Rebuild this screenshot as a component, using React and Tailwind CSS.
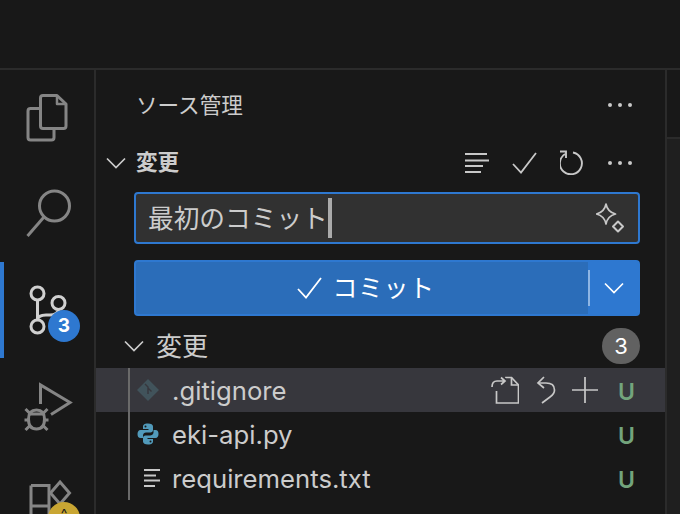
import React from 'react';

// Activity bar icons are drawn on a 96x96 box
const FilesIcon = () => (
  <svg width="96" height="96" viewBox="0 0 96 96" fill="none" stroke="#858585" strokeWidth="3" strokeLinejoin="round">
    <path d="M43 25.5 H57 L66 34 V56 Q66 58.5 63.5 58.5 H43 Q40.5 58.5 40.5 56 V28 Q40.5 25.5 43 25.5 Z" />
    <path d="M57 26 V34 H65.5" strokeWidth="2.5" />
    <path d="M40 38.5 H30.5 Q28 38.5 28 41 V67.5 Q28 70 30.5 70 H51.5 Q54 70 54 67.5 V59" />
  </svg>
);

const SearchIcon = () => (
  <svg width="96" height="96" viewBox="0 0 96 96" fill="none" stroke="#858585" strokeWidth="3">
    <circle cx="54.5" cy="40" r="15" />
    <path d="M44 51 L27.5 70" />
  </svg>
);

const GitIcon = () => (
  <svg width="96" height="96" viewBox="0 0 96 96" fill="none" stroke="#d0d0d0" strokeWidth="3">
    <circle cx="37.5" cy="31.5" r="6.5" />
    <circle cx="58.5" cy="41" r="6.5" />
    <circle cx="37.5" cy="64.5" r="6.5" />
    <path d="M37.5 38 V58" />
    <path d="M58.5 47.5 Q58 53 50 53 H46 Q38 53 37.5 58" />
  </svg>
);

const DebugIcon = () => (
  <svg width="96" height="96" viewBox="0 0 96 96" fill="none" stroke="#858585" strokeWidth="3">
    <path d="M40.5 46 V27 L70 44.5 L51 56.5" />
    <path d="M28.5 61 Q28.5 52 36.5 52 Q44.5 52 44.5 61 Q44.5 71 36.5 71 Q28.5 71 28.5 61 Z" />
    <path d="M29 56 H44 M25.5 51 L30.5 56 M47.5 51 L42.5 56 M24.5 62 H28.5 M44.5 62 H48.5 M25.5 72 L30.5 67 M47.5 72 L42.5 67" />
  </svg>
);

const ExtensionsIcon = () => (
  <svg width="96" height="96" viewBox="0 0 96 96" fill="none" stroke="#858585" strokeWidth="3">
    <path d="M31 31.5 H49 V76 M31 31.5 V76 M31 52 H49" />
    <path d="M60 28 L69.5 39 L60 50 L50.5 39 Z" />
  </svg>
);

const Chevron = ({ className = '', color = '#cccccc' }) => (
  <svg width="20" height="12" viewBox="0 0 20 12" fill="none" stroke={color} strokeWidth="1.7" className={className}>
    <path d="M1 1.5 L10 10.5 L19 1.5" />
  </svg>
);

const Dots = () => (
  <svg width="24" height="6" viewBox="0 0 24 6" fill="#c8c8c8">
    <circle cx="2" cy="3" r="2" />
    <circle cx="12" cy="3" r="2" />
    <circle cx="22" cy="3" r="2" />
  </svg>
);

const ListIcon = () => (
  <svg width="24" height="20" viewBox="0 0 24 20" fill="none" stroke="#c8c8c8" strokeWidth="2">
    <path d="M0 1 H22 M0 7.5 H24 M0 13 H18 M0 19 H16" />
  </svg>
);

const CheckIcon = ({ color = '#c8c8c8', width = 25, height = 22 }) => (
  <svg width={width} height={height} viewBox="0 0 25 22" fill="none" stroke={color} strokeWidth="1.8">
    <path d="M1 12 L9 20.5 L24 1" />
  </svg>
);

const RefreshIcon = () => (
  <svg width="24" height="25" viewBox="0 0 24 25" fill="none" stroke="#c8c8c8" strokeWidth="1.9">
    <path d="M5 4 A11 11 0 1 0 13 2.5" />
    <path d="M0 1.5 H6 V8" />
  </svg>
);

const SparkleIcon = () => (
  <svg width="30" height="30" viewBox="0 0 30 30" fill="none" stroke="#c8c8c8" strokeWidth="1.7" strokeLinejoin="round">
    <path d="M10 1 Q11.5 9 19.5 11 Q11.5 13 10 21 Q8.5 13 0.5 11 Q8.5 9 10 1 Z" />
    <path d="M22 18.5 L27 23.5 L22 28.5 L17 23.5 Z" strokeWidth="2" />
  </svg>
);

const OpenFileIcon = () => (
  <svg width="28" height="28" viewBox="0 0 28 28" fill="none" stroke="#c8c8c8" strokeWidth="1.7">
    <path d="M5.5 15 V27 H27.5 V9 L20.5 1.5 H15 V2" />
    <path d="M20.5 1.5 V9 H27.5" />
    <path d="M1 11 Q1 5 6 5 H14 M10 1.5 L14 5 L10 8.5" />
  </svg>
);

const DiscardIcon = () => (
  <svg width="20" height="28" viewBox="0 0 20 28" fill="none" stroke="#c8c8c8" strokeWidth="1.7">
    <path d="M2 7 H10 Q18.5 7 18.5 14 Q18.5 18 14 21 L6 27" />
    <path d="M8 1 L2 7 L8 12" />
  </svg>
);

const PlusIcon = () => (
  <svg width="26" height="26" viewBox="0 0 26 26" fill="none" stroke="#c8c8c8" strokeWidth="1.7">
    <path d="M0 13 H26 M13 0 V26" />
  </svg>
);

const GitFileIcon = () => (
  <svg width="22" height="22" viewBox="0 0 22 22">
    <path d="M11 0 L22 11 L11 22 L0 11 Z" fill="#41535b" />
    <path d="M8 5 L11 8 V15 M11 9 L14.5 12.5" stroke="#37373d" strokeWidth="1.4" fill="none" />
  </svg>
);

const PythonIcon = () => (
  <svg width="22" height="22" viewBox="0 0 22 22" fill="#519aba">
    <path d="M11 0.5 C7 0.5 6 2 6 3.5 V6 H11.5 V7 H3.5 C1.5 7 0.5 9 0.5 11 C0.5 13.5 1.5 15 3.5 15 H6 V12.5 C6 10.5 7.5 9.5 9 9.5 H13.5 C15 9.5 16 8.5 16 7 V3.5 C16 1.5 14 0.5 11 0.5 Z" />
    <path d="M11 21.5 C15 21.5 16 20 16 18.5 V16 H10.5 V15 H18.5 C20.5 15 21.5 13 21.5 11 C21.5 8.5 20.5 7 18.5 7 H16.5 V9.5 C16.5 11.5 14.5 12.5 13 12.5 H8.5 C7 12.5 6 13.5 6 15 V18.5 C6 20.5 8 21.5 11 21.5 Z" />
    <circle cx="8.5" cy="3.5" r="1" fill="#181818" />
    <circle cx="13.5" cy="18.5" r="1" fill="#181818" />
  </svg>
);

const TextFileIcon = () => (
  <svg width="18" height="18" viewBox="0 0 18 18" fill="none" stroke="#c8c8c8" strokeWidth="2" className="ml-[6px]">
    <path d="M1 1 H17 M1 6.5 H13 M1 11.5 H17 M1 17 H12" />
  </svg>
);

const ActivityItem = ({ children, active }) => (
  <div className={`relative h-[96px] w-[95px] shrink-0 ${active ? 'border-l-4 border-[#2e78d0]' : ''}`}>
    <div className={active ? '-ml-1' : ''}>{children}</div>
  </div>
);

const FileRow = ({ icon, name, actions, hover }) => (
  <div className={`flex h-[44px] items-center pr-[33px] ${hover ? 'bg-[#37373d]' : ''}`}>
    <div className="ml-[32px] h-full w-[2px] bg-[#6a6a6a]" />
    <div className="flex w-[42px] pl-[7px]">{icon}</div>
    <span className="pt-[1px] text-[25.7px] leading-none text-[#cccccc] font-['Inter',sans-serif]">{name}</span>
    <div className="ml-auto flex items-center">
      {actions}
      <span className="ml-[20px] w-[14px] pt-[4px] text-center text-[23px] font-semibold text-[#73a47c] font-['Inter',sans-serif]">U</span>
    </div>
  </div>
);

export default function App() {
  return (
    <div className="flex h-[514px] w-[680px] flex-col overflow-hidden bg-[#181818] font-['Inter','Noto_Sans_CJK_JP',sans-serif]">
      <div className="h-[70px] shrink-0 border-b-2 border-[#2b2b2b]" />

      <div className="flex min-h-0 flex-1">
        {/* Activity bar */}
        <div className="w-[96px] shrink-0 border-r-2 border-[#2b2b2b]">
          <ActivityItem><FilesIcon /></ActivityItem>
          <ActivityItem><SearchIcon /></ActivityItem>
          <ActivityItem active>
            <GitIcon />
            <span className="absolute left-[44px] top-[48px] flex h-[32px] w-[32px] items-center justify-center rounded-full bg-[#2e78d0] text-[19px] font-bold text-white">3</span>
          </ActivityItem>
          <ActivityItem><DebugIcon /></ActivityItem>
          <ActivityItem>
            <ExtensionsIcon />
            <span className="absolute left-[48px] top-[48px] flex h-[32px] w-[32px] items-start justify-center rounded-full bg-[#c9a633] pt-[5px] text-[14px] leading-none text-[#181818]">^</span>
          </ActivityItem>
        </div>

        {/* Source control */}
        <div className="flex w-[569px] shrink-0 flex-col">
          <div className="flex h-[70px] items-center justify-between pl-[40px] pr-[33px]">
            <span className="text-[21.6px] text-[#cccccc]">ソース管理</span>
            <Dots />
          </div>

          <div className="flex h-[46px] items-center pb-[1px] pl-[10px] pr-[33px]">
            <Chevron />
            <span className="ml-[10px] text-[21.6px] font-bold text-[#cccccc]">変更</span>
            <div className="ml-auto flex items-center gap-[23px]">
              <ListIcon />
              <CheckIcon />
              <RefreshIcon />
              <div className="ml-[1px]"><Dots /></div>
            </div>
          </div>

          <div className="ml-[38px] mr-[25px] mt-[6px] flex h-[52px] items-center rounded-[4px] border-2 border-[#2e78d0] bg-[#313131] px-[12px]">
            <span className="pt-[1px] text-[25.7px] leading-none text-[#cccccc]">最初のコミット</span>
            <span className="h-[40px] w-[4px] bg-[#aaaaaa]" />
            <div className="ml-auto"><SparkleIcon /></div>
          </div>

          <div className="ml-[38px] mr-[25px] mt-[16px] flex h-[56px] overflow-hidden rounded-[4px] border-2 border-[#2e78d0] bg-[#2e78d0] text-white">
            <div className="flex flex-1 items-center justify-center gap-[10px] bg-[#2b6db9] pl-[8px]">
              <CheckIcon color="#ffffff" width={25} height={22} />
              <span className="text-[25px] leading-none tracking-[0.5px]">コミット</span>
            </div>
            <div className="flex w-[50px] items-center">
              <div className="h-[36px] w-[2px] bg-[#8fb6e4]" />
              <Chevron color="#ffffff" className="ml-[14px]" />
            </div>
          </div>

          <div className="flex h-[52px] items-center pl-[28px] pr-[25px] pt-[8px]">
            <Chevron />
            <span className="ml-[12px] pt-[1px] text-[26px] leading-none text-[#cccccc]">変更</span>
            <span className="ml-auto flex h-[36px] w-[38px] items-center justify-center rounded-full bg-[#616161] text-[22px] text-white">3</span>
          </div>

          <FileRow
            hover
            icon={<GitFileIcon />}
            name=".gitignore"
            actions={
              <div className="flex items-center">
                <OpenFileIcon />
                <div className="ml-[17px]"><DiscardIcon /></div>
                <div className="ml-[16px]"><PlusIcon /></div>
              </div>
            }
          />
          <FileRow icon={<PythonIcon />} name="eki-api.py" />
          <FileRow icon={<TextFileIcon />} name="requirements.txt" />
        </div>

        {/* Editor edge */}
        <div className="flex-1 border-l-2 border-[#2b2b2b]">
          <div className="h-[69px] border-b-2 border-[#2b2b2b]" />
          <div className="h-full bg-[#1f1f1f]" />
        </div>
      </div>
    </div>
  );
}
